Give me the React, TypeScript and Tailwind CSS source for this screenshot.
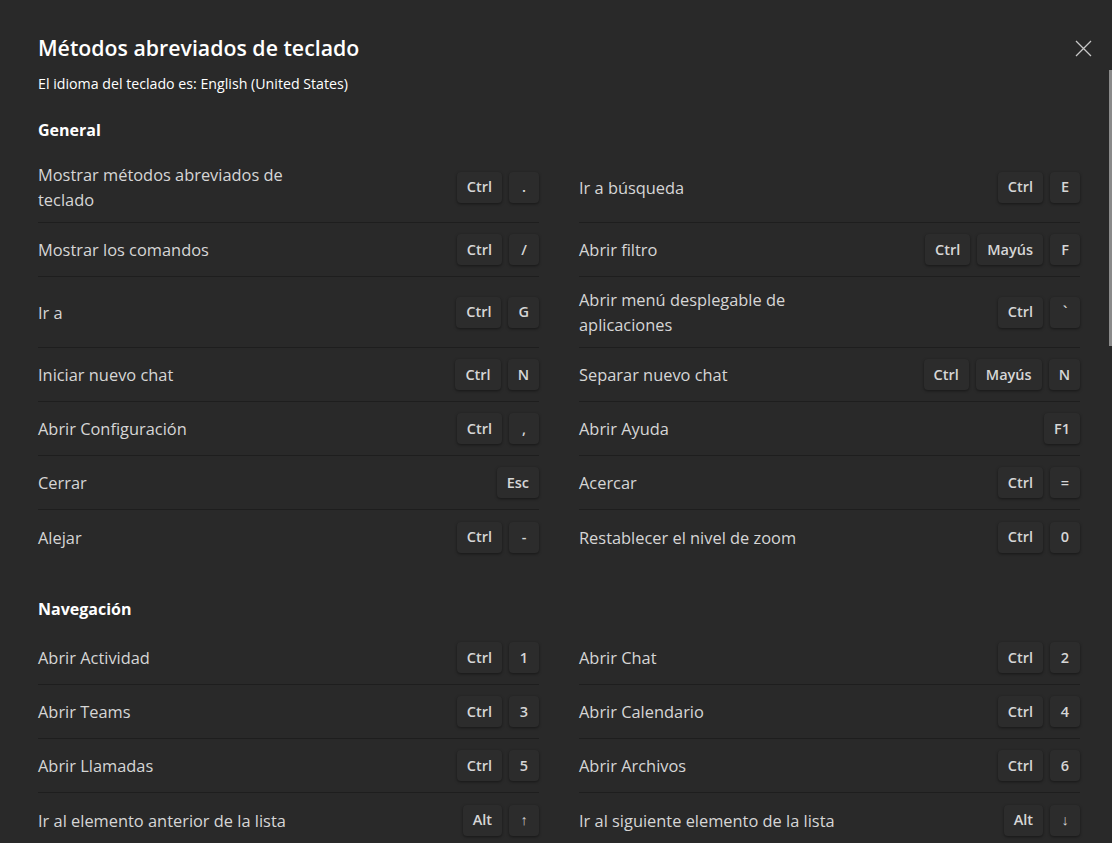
import React from "react";

type Item = { label: React.ReactNode; keys: string[] };
type Row = [Item, Item];

const general: Row[] = [
  [
    { label: <>Mostrar métodos abreviados de<br />teclado</>, keys: ["Ctrl", "."] },
    { label: "Ir a búsqueda", keys: ["Ctrl", "E"] },
  ],
  [
    { label: "Mostrar los comandos", keys: ["Ctrl", "/"] },
    { label: "Abrir filtro", keys: ["Ctrl", "Mayús", "F"] },
  ],
  [
    { label: "Ir a", keys: ["Ctrl", "G"] },
    { label: <>Abrir menú desplegable de<br />aplicaciones</>, keys: ["Ctrl", "`"] },
  ],
  [
    { label: "Iniciar nuevo chat", keys: ["Ctrl", "N"] },
    { label: "Separar nuevo chat", keys: ["Ctrl", "Mayús", "N"] },
  ],
  [
    { label: "Abrir Configuración", keys: ["Ctrl", ","] },
    { label: "Abrir Ayuda", keys: ["F1"] },
  ],
  [
    { label: "Cerrar", keys: ["Esc"] },
    { label: "Acercar", keys: ["Ctrl", "="] },
  ],
  [
    { label: "Alejar", keys: ["Ctrl", "-"] },
    { label: "Restablecer el nivel de zoom", keys: ["Ctrl", "0"] },
  ],
];

const nav: Row[] = [
  [
    { label: "Abrir Actividad", keys: ["Ctrl", "1"] },
    { label: "Abrir Chat", keys: ["Ctrl", "2"] },
  ],
  [
    { label: "Abrir Teams", keys: ["Ctrl", "3"] },
    { label: "Abrir Calendario", keys: ["Ctrl", "4"] },
  ],
  [
    { label: "Abrir Llamadas", keys: ["Ctrl", "5"] },
    { label: "Abrir Archivos", keys: ["Ctrl", "6"] },
  ],
  [
    { label: "Ir al elemento anterior de la lista", keys: ["Alt", "↑"] },
    { label: "Ir al siguiente elemento de la lista", keys: ["Alt", "↓"] },
  ],
];

function Key({ k }: { k: string }) {
  return (
    <span className="flex h-[31px] min-w-[30px] items-center justify-center rounded-[4px] bg-[#2c2c2c] px-[10px] text-[14.5px] font-semibold text-[#d6d6d6] shadow-[0_1px_3px_rgba(0,0,0,0.45)]">
      {k}
    </span>
  );
}

function Cell({ item, last }: { item: Item; last: boolean }) {
  return (
    <div
      className={
        "flex min-h-[54px] items-center justify-between py-[10px] " +
        (last ? "" : "border-b border-[#1e1e1e]")
      }
    >
      <div className="text-[16.4px] leading-[25px] text-[#d6d6d6]">{item.label}</div>
      <div className="flex items-center gap-[7px]">
        {item.keys.map((k, i) => (
          <Key key={i} k={k} />
        ))}
      </div>
    </div>
  );
}

function Section({ title, rows, first }: { title: string; rows: Row[]; first?: boolean }) {
  return (
    <div className={first ? "" : "mt-[34px]"}>
      <h2 className="mb-[11px] text-[16px] font-bold leading-[22px] text-white">{title}</h2>
      <div className="grid grid-cols-[501px_501px] gap-x-[40px]">
        {rows.map((r, i) => (
          <React.Fragment key={i}>
            <Cell item={r[0]} last={i === rows.length - 1} />
            <Cell item={r[1]} last={i === rows.length - 1} />
          </React.Fragment>
        ))}
      </div>
    </div>
  );
}

export default function App() {
  return (
    <div
      className="relative h-[843px] w-[1112px] overflow-hidden bg-[#292929]"
      style={{ fontFamily: '"Open Sans", "Noto Sans", sans-serif' }}
    >
      <button className="absolute right-[20px] top-[40px] flex h-[17px] w-[17px] items-center justify-center">
        <svg width="17" height="17" viewBox="0 0 17 17" fill="none">
          <path d="M1 1L16 16M16 1L1 16" stroke="#c8c8c8" strokeWidth="1.3" />
        </svg>
      </button>
      <div className="absolute right-0 top-[70px] h-[276px] w-[3px] bg-[#8a8a8a]" />
      <div className="px-[38px] pt-[34px]">
        <h1 className="text-[21.3px] font-semibold leading-[28px] text-white">
          Métodos abreviados de teclado
        </h1>
        <p className="mt-[12px] text-[14.2px] leading-[20px] text-white">
          El idioma del teclado es: English (United States)
        </p>
        <div className="mt-[25px]">
          <Section title="General" rows={general} first />
          <Section title="Navegación" rows={nav} />
        </div>
      </div>
    </div>
  );
}
